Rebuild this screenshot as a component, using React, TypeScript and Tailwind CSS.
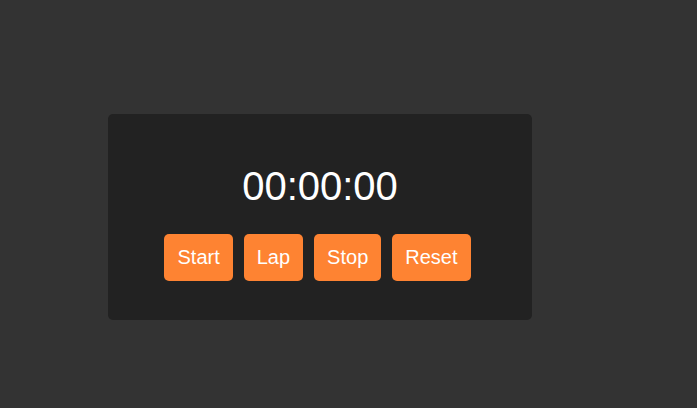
const buttons = ['Start', 'Lap', 'Stop', 'Reset']

export default function App() {
  return (
    <div className="h-[408px] w-full bg-[#333333] pl-[108px] pt-[114px] font-['Liberation_Sans',Arial,sans-serif] text-white">
      <div className="flex h-[206px] w-[424px] flex-col items-center rounded-[5px] bg-[#222222] pt-[49px]">
        <div className="text-[40px] leading-[46px]">00:00:00</div>
        <div className="mt-[25px] flex justify-center gap-[11px] pr-[5px]">
          {buttons.map((label) => (
            <button
              key={label}
              className="rounded-[5px] bg-[#fe8332] px-[13px] py-[12px] text-[20px] leading-[23px] text-white"
            >
              {label}
            </button>
          ))}
        </div>
      </div>
    </div>
  )
}
